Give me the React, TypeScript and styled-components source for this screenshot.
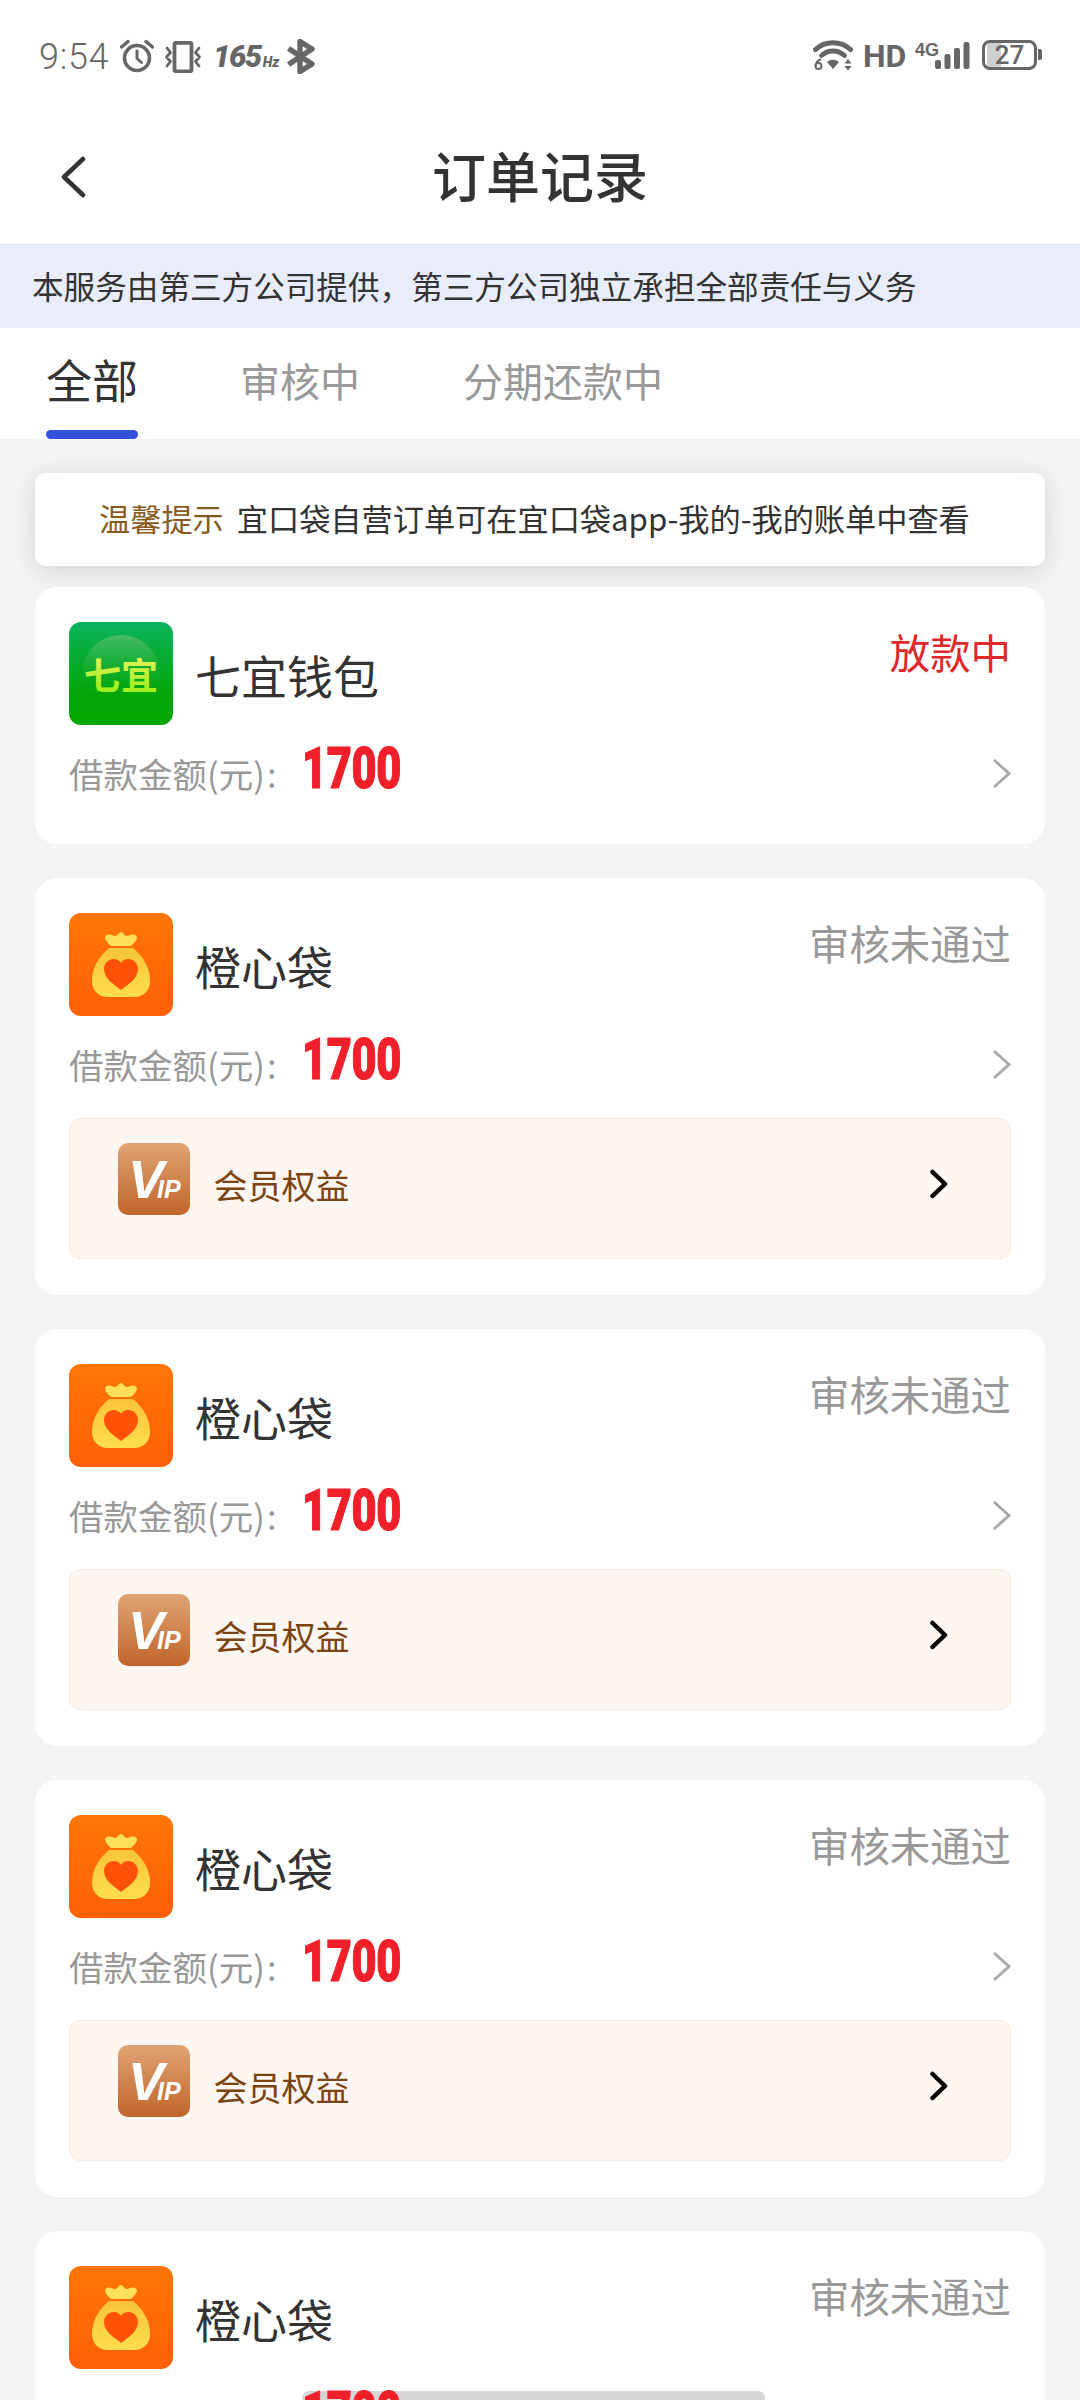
import React from 'react';
import styled, { createGlobalStyle } from 'styled-components';

const GlobalStyle = createGlobalStyle`
    html, body {
        margin: 0;
        padding: 0;
        background: #f4f4f4;
        overflow: hidden;
    }
    * {
        box-sizing: border-box;
    }
`;

const Page = styled.div`
    width: 1080px;
    height: 2400px;
    overflow: hidden;
    background: #f4f4f4;
    font-family: "Noto Sans CJK SC", "Noto Sans", sans-serif;
    color: #333;
`;

// status bar
const StatusBar = styled.div`
    height: 110px;
    background: #fff;
    display: flex;
    align-items: flex-start;
    justify-content: space-between;
    padding: 39px 43px 0 39px;
    color: #666;
`;

const StatusGroup = styled.div`
    display: flex;
    align-items: flex-start;
`;

const Clock = styled.span`
    font-family: Roboto, sans-serif;
    font-weight: 300;
    font-size: 36px;
    line-height: 36px;
    letter-spacing: 0.7px;
    width: 81px;
`;

const Hz = styled.span`
    font-family: Roboto, sans-serif;
    font-style: italic;
    font-weight: 900;
    font-size: 31px;
    line-height: 34px;
    width: 64px;
    margin: 1px 9px 0 11px;
    letter-spacing: -1.5px;
    white-space: nowrap;

    small {
        font-size: 14px;
        margin-left: 2px;
        letter-spacing: 0;
    }
`;

const HdText = styled.span`
    font-family: Roboto, "Liberation Sans", sans-serif;
    font-weight: 700;
    font-size: 32px;
    line-height: 32px;
    margin: 0 0 0 10px;
    width: 44px;
    padding-top: 1px;
`;

const NetText = styled.span`
    font-family: "Liberation Sans", sans-serif;
    font-weight: 700;
    font-size: 18px;
    line-height: 18px;
    margin: 2px -6px 0 8px;
    width: 26px;
`;

const Battery = styled.div`
    position: relative;
    width: 55px;
    height: 30px;
    margin-left: 12px;
    margin-top: 1px;
    border: 3.5px solid #666;
    border-radius: 8px;
    display: flex;
    align-items: center;
    justify-content: center;
    font-family: Roboto, sans-serif;
    font-weight: 500;
    font-size: 26px;
    line-height: 1;
    background: linear-gradient(90deg, #fff 0 2px, #cfcfcf 2px 16px, #fff 16px);
    background-clip: padding-box;

    &::after {
        content: '';
        position: absolute;
        right: -8px;
        top: 6px;
        width: 4px;
        height: 11px;
        background: #666;
        border-radius: 0 2px 2px 0;
    }
`;

// title
const NavBar = styled.div`
    height: 133px;
    background: #fff;
    display: flex;
    align-items: center;
    justify-content: center;
    position: relative;
`;

const BackButton = styled.svg`
    position: absolute;
    left: 60px;
    top: 46px;
`;

const Title = styled.h1`
    margin: 0;
    font-size: 54px;
    font-weight: 500;
    line-height: 1;
    color: #333;
    padding-bottom: 4px;
`;

const Banner = styled.div`
    height: 85px;
    background: #e9edfb;
    padding: 0 0 2px 32px;
    display: flex;
    align-items: center;
    font-size: 31.6px;
    color: #333;
`;

const Tabs = styled.div`
    height: 111px;
    background: #fff;
    display: flex;
    padding-left: 46px;
`;

const Tab = styled.div<{ $active?: boolean }>`
    position: relative;
    font-size: ${p => (p.$active ? '46px' : '40px')};
    color: ${p => (p.$active ? '#333' : '#999')};
    line-height: 1;
    padding-top: ${p => (p.$active ? '27px' : '32px')};
    margin-right: ${p => (p.$active ? '102px' : '103px')};

    ${p => p.$active && `
        &::after {
            content: '';
            position: absolute;
            left: 0;
            right: 0;
            bottom: 0;
            height: 9px;
            border-radius: 5px;
            background: #3450d8;
        }
    `}
`;

const List = styled.div`
    padding: 34px 35px 0;
    display: flex;
    flex-direction: column;
`;

const Notice = styled.div`
    height: 93px;
    background: #fff;
    border-radius: 10px;
    box-shadow: 0 4px 26px rgba(0, 0, 0, 0.14);
    display: flex;
    align-items: center;
    padding: 0 0 5px 64px;
    font-size: 31.2px;
    color: #333;
    margin-bottom: 21px;
    position: relative;
`;

const NoticeTag = styled.span`
    color: #8a5a1c;
    margin-right: 13px;
`;

const Card = styled.div<{ $vip?: boolean }>`
    position: relative;
    background: #fff;
    border-radius: 22px;
    padding: 35px 34px ${p => (p.$vip ? '35px' : '36px')};
    margin-bottom: 34px;
    flex-shrink: 0;
`;

const CardHead = styled.div`
    display: flex;
    align-items: center;
    height: 103px;
`;

const AppIcon = styled.svg`
    display: block;
    flex-shrink: 0;
`;

const AppName = styled.div`
    font-size: 46px;
    line-height: 1;
    margin-left: 22px;
    margin-top: 0;
    color: #333;
`;

const Status = styled.div<{ $tone: 'red' | 'grey' }>`
    margin-left: auto;
    align-self: flex-start;
    margin-top: 8px;
    font-size: 40.4px;
    line-height: 1.1;
    color: ${p => (p.$tone === 'red' ? '#e0282c' : '#999')};
`;

const AmountRow = styled.div`
    position: relative;
    height: 83px;
    display: flex;
    align-items: flex-start;
`;

const AmountLabel = styled.span`
    font-size: 34.5px;
    line-height: 1;
    color: #999;
    margin-top: 31px;
    width: 233px;
    flex-shrink: 0;
    white-space: nowrap;
`;

const AmountValue = styled.span`
    position: relative;
    z-index: 1;
    display: inline-block;
    font-family: Roboto, sans-serif;
    font-weight: 900;
    font-size: 57px;
    line-height: 1;
    margin-top: 15px;
    color: #f0202a;
    letter-spacing: -0.5px;
    -webkit-text-stroke: 1.2px #f0202a;
    transform: scaleX(0.76);
    transform-origin: left center;
`;

const RowChevron = styled.svg`
    position: absolute;
    right: -1px;
    top: 33px;
`;

// grey block over the amount on the last, cut-off card
const AmountMask = styled.div`
    position: absolute;
    left: 233px;
    top: 22px;
    width: 463px;
    height: 50px;
    background: #d6d6d6;
    border-radius: 7px;
`;

const VipRow = styled.div`
    height: 141px;
    margin-top: 19px;
    margin-bottom: 1px;
    background: #fdf6f1;
    border: 1.5px solid #f8ebe1;
    border-radius: 11px;
    display: flex;
    align-items: flex-start;
    padding: 23.5px 62px 0 47.5px;
`;

const VipText = styled.span`
    font-size: 34px;
    line-height: 1;
    color: #7a4310;
    margin-left: 24px;
    margin-top: 25px;
`;

const VipChevron = styled.svg`
    margin-left: auto;
    margin-top: 26px;
`;

const AlarmIcon = () => (
    <svg width="34" height="34" viewBox="0 0 34 34">
        <circle cx="17" cy="19" r="12.5" fill="none" stroke="#666" strokeWidth="3.6" />
        <path d="M17 12v7.5l4.5 4" fill="none" stroke="#666" strokeWidth="3" strokeLinecap="round" strokeLinejoin="round" />
        <path d="M1.5 8 8 2.5M32.5 8 26 2.5" stroke="#666" strokeWidth="3.4" strokeLinecap="round" />
    </svg>
);

const VibrateIcon = () => (
    <svg width="38" height="32" viewBox="0 0 38 32" style={{ marginLeft: 10, marginTop: 2 }}>
        <rect x="10.500" y="1.800" width="17" height="28.500" rx="1.500" fill="none" stroke="#666" strokeWidth="3.800" />
        <path d="M3 7l3.500 4.500L2.500 16l4 4.500L3 25M35 7l-3.500 4.500 4 4.500-4 4.500L35 25" fill="none" stroke="#666" strokeWidth="2.800" strokeLinecap="round" strokeLinejoin="round" />
    </svg>
);

const BluetoothIcon = () => (
    <svg width="30" height="35" viewBox="0 0 30 35">
        <path d="M2.500 9.500 26 25 14 32.500V2.500L26 10 2.500 25.500" fill="none" stroke="#666" strokeWidth="5.400" strokeLinejoin="round" />
    </svg>
);

const WifiIcon = () => (
    <svg width="40" height="32" viewBox="0 0 40 32">
        <path d="M2.500 10.500C12 1.500 28 1.500 37.500 10.500" fill="none" stroke="#666" strokeWidth="5" strokeLinecap="round" />
        <path d="M8.500 16.500C15 10.500 25 10.500 31.500 16.500" fill="none" stroke="#666" strokeWidth="4.800" strokeLinecap="round" />
        <path d="M14 23c3.500-3 8.500-3 12 0l-6 7z" fill="#666" />
        <circle cx="5.500" cy="27" r="3" fill="none" stroke="#666" strokeWidth="2" />
        <path d="M8 20.500C5 21 3 23.500 2.500 27" fill="none" stroke="#666" strokeWidth="2" />
        <path d="M35 20l3.500 4.500h-7zM35 31.500l3.500-4.500h-7z" fill="#666" />
    </svg>
);

const SignalIcon = () => (
    <svg width="35" height="29" viewBox="0 0 35 29" style={{ marginTop: 2 }}>
        <rect x="0" y="19" width="6" height="9" rx="2" fill="#666" />
        <rect x="9.500" y="13" width="6" height="15" rx="2" fill="#666" />
        <rect x="19" y="7" width="6" height="21" rx="2" fill="#666" />
        <rect x="28.500" y="1" width="6" height="27" rx="2" fill="#666" />
    </svg>
);

const QiyiIcon = () => (
    <AppIcon width="104" height="103" viewBox="0 0 104 103">
        <defs>
            <linearGradient id="qiBg" x1="0" y1="0" x2="0" y2="1">
                <stop offset="0" stopColor="#0cb25e" />
                <stop offset="0.7" stopColor="#02a506" />
                <stop offset="1" stopColor="#02a600" />
            </linearGradient>
            <linearGradient id="qiDome" x1="0" y1="0" x2="0" y2="1">
                <stop offset="0" stopColor="#48bb66" />
                <stop offset="0.75" stopColor="#0aa81a" stopOpacity="0" />
            </linearGradient>
            <linearGradient id="qiText" x1="0" y1="0" x2="0" y2="1">
                <stop offset="0.15" stopColor="#e8f25a" />
                <stop offset="0.9" stopColor="#97ef14" />
            </linearGradient>
        </defs>
        <rect width="104" height="103" rx="12" fill="url(#qiBg)" />
        <circle cx="52" cy="52" r="39" fill="url(#qiDome)" />
        <text x="52" y="68" textAnchor="middle" fontFamily="'Noto Sans CJK SC', sans-serif" fontWeight="700" fontSize="37" fill="url(#qiText)">七宜</text>
    </AppIcon>
);

const BagIcon = ({ id }: { id: string }) => (
    <AppIcon width="104" height="103" viewBox="0 0 104 103">
        <defs>
            <linearGradient id={`${id}Bg`} x1="0" y1="0" x2="0" y2="1">
                <stop offset="0" stopColor="#ff7605" />
                <stop offset="1" stopColor="#ff6008" />
            </linearGradient>
            <linearGradient id={`${id}Bag`} x1="0" y1="0" x2="0" y2="1">
                <stop offset="0" stopColor="#f9c437" />
                <stop offset="1" stopColor="#ffde4e" />
            </linearGradient>
        </defs>
        <rect width="104" height="103" rx="12" fill={`url(#${id}Bg)`} />
        <path d="M36 24c3-5 8-1 10-1 2.500 0 4-4 6-4s3.500 4 6 4c2 0 7-4 10 1 0 4-4 7-6 9H42c-2-2-6-5-6-9z" fill="#ffe05a" />
        <path d="M40 35h24c6 5 17 16 17 33 0 10-7 16-16 16H39c-9 0-16-6-16-16 0-17 11-28 17-33z" fill={`url(#${id}Bag)`} />
        <path d="M52 77C46 72 35 66 35 56c0-6 5-10 9.500-10 3.500 0 6 1.500 7.500 4 1.500-2.500 4-4 7.500-4 4.500 0 9.500 4 9.500 10 0 10-11 16-17 21z" fill="#ff5207" />
    </AppIcon>
);

const VipIcon = ({ id }: { id: string }) => (
    <svg width="72" height="72" viewBox="0 0 72 72" style={{ display: 'block', flexShrink: 0 }}>
        <defs>
            <linearGradient id={id} x1="0" y1="0" x2="0" y2="1">
                <stop offset="0" stopColor="#e0a474" />
                <stop offset="1" stopColor="#c0652b" />
            </linearGradient>
        </defs>
        <rect width="72" height="72" rx="10" fill={`url(#${id})`} />
        <text x="10" y="55" fontFamily="'Liberation Sans', sans-serif" fontStyle="italic" fontWeight="700" fontSize="54" fill="#fff">
            V<tspan dx="-7" fontSize="25">IP</tspan>
        </text>
    </svg>
);

const GreyChevron = () => (
    <RowChevron width="20" height="31" viewBox="0 0 20 31">
        <path d="M2 2l15 13.500L2 29" fill="none" stroke="#aaa" strokeWidth="3" />
    </RowChevron>
);

interface OrderProps {
    id: string;
    name: string;
    status: string;
    tone: 'red' | 'grey';
    vip?: boolean;
    masked?: boolean;
}

const OrderCard: React.FC<OrderProps> = ({ id, name, status, tone, vip, masked }) => (
    <Card $vip={vip}>
        <CardHead>
            {vip ? <BagIcon id={id} /> : <QiyiIcon />}
            <AppName>{name}</AppName>
            <Status $tone={tone}>{status}</Status>
        </CardHead>
        <AmountRow>
            {masked && <AmountMask />}
            <AmountLabel>借款金额(元){'\u200a'}:</AmountLabel>
            <AmountValue>1700</AmountValue>
            <GreyChevron />
        </AmountRow>
        {vip && (
            <VipRow>
                <VipIcon id={`${id}Vip`} />
                <VipText>会员权益</VipText>
                <VipChevron width="18" height="30" viewBox="0 0 18 30">
                    <path d="M2.500 3 15 15 2.500 27" fill="none" stroke="#000" strokeWidth="4.500" strokeLinecap="round" strokeLinejoin="round" />
                </VipChevron>
            </VipRow>
        )}
    </Card>
);

const orders: OrderProps[] = [
    { id: 'a', name: '七宜钱包', status: '放款中', tone: 'red' },
    { id: 'b', name: '橙心袋', status: '审核未通过', tone: 'grey', vip: true },
    { id: 'c', name: '橙心袋', status: '审核未通过', tone: 'grey', vip: true },
    { id: 'd', name: '橙心袋', status: '审核未通过', tone: 'grey', vip: true },
    { id: 'e', name: '橙心袋', status: '审核未通过', tone: 'grey', vip: true, masked: true },
];

export default function App() {
    return (
        <Page>
            <GlobalStyle />
            <StatusBar>
                <StatusGroup>
                    <Clock>9:54</Clock>
                    <AlarmIcon />
                    <VibrateIcon />
                    <Hz>165<small>Hz</small></Hz>
                    <BluetoothIcon />
                </StatusGroup>
                <StatusGroup>
                    <WifiIcon />
                    <HdText>HD</HdText>
                    <NetText>4G</NetText>
                    <SignalIcon />
                    <Battery>27</Battery>
                </StatusGroup>
            </StatusBar>
            <NavBar>
                <BackButton width="26" height="42" viewBox="0 0 26 42">
                    <path d="M23 3 4 21l19 18" fill="none" stroke="#333" strokeWidth="4.500" strokeLinecap="round" strokeLinejoin="round" />
                </BackButton>
                <Title>订单记录</Title>
            </NavBar>
            <Banner>本服务由第三方公司提供，第三方公司独立承担全部责任与义务</Banner>
            <Tabs>
                <Tab $active>全部</Tab>
                <Tab>审核中</Tab>
                <Tab>分期还款中</Tab>
            </Tabs>
            <List>
                <Notice>
                    <NoticeTag>温馨提示</NoticeTag>
                    宜口袋自营订单可在宜口袋app-我的-我的账单中查看
                </Notice>
                {orders.map(order => (
                    <OrderCard key={order.id} {...order} />
                ))}
            </List>
        </Page>
    );
}
